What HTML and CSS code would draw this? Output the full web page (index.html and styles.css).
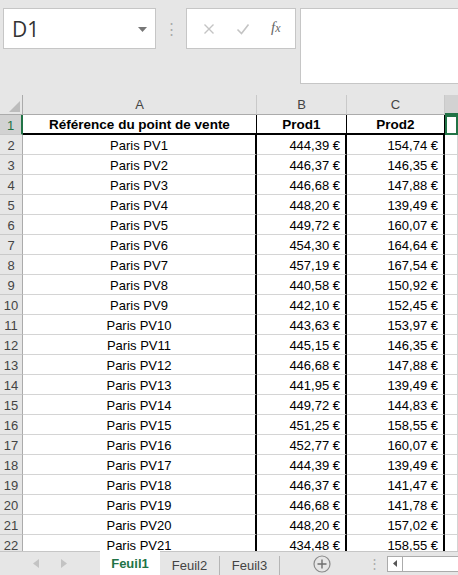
FILE: index.html
```html
<!DOCTYPE html>
<html lang="fr">
<head>
<meta charset="utf-8">
<title>Feuil1</title>
<link rel="stylesheet" href="styles.css">
</head>
<body>
<div class="app">
  <div class="formula-area">
    <div class="namebox">
      <span class="name">D1</span>
      <svg class="dd" width="9" height="5" viewBox="0 0 9 5"><path d="M0 0h9L4.5 5z" fill="#777"/></svg>
    </div>
    <div class="vdots">⋮</div>
    <div class="fbuttons">
      <svg class="ic" width="12" height="12" viewBox="0 0 12 12"><path d="M1.5 1.5l9 9M10.5 1.5l-9 9" stroke="#c4c4c4" stroke-width="1.4"/></svg>
      <svg class="ic" width="14" height="12" viewBox="0 0 14 12"><path d="M1.5 6.5l4 4L12.5 1.5" stroke="#c4c4c4" stroke-width="1.6" fill="none"/></svg>
      <span class="fx">f<span class="fxx">x</span></span>
    </div>
    <div class="finput"></div>
  </div>

  <div class="sheet" id="sheet"></div>

  <div class="tabbar">
    <div class="nav">
      <svg width="6" height="9" viewBox="0 0 6 9"><path d="M6 0v9L0 4.5z" fill="#c3c3c3"/></svg>
      <svg width="6" height="9" viewBox="0 0 6 9"><path d="M0 0v9l6-4.5z" fill="#c3c3c3"/></svg>
    </div>
    <div class="tab active">Feuil1</div>
    <div class="tab">Feuil2</div>
    <div class="tab">Feuil3</div>
    <div class="add">
      <svg width="18" height="18" viewBox="0 0 18 18"><circle cx="9" cy="9" r="8" fill="none" stroke="#8a8a8a" stroke-width="1.2"/><path d="M9 4.5v9M4.5 9h9" stroke="#6e6e6e" stroke-width="1.4"/></svg>
    </div>
    <div class="tdots">⋮</div>
    <div class="hscroll">
      <div class="sbtn"><svg width="4" height="7" viewBox="0 0 4 7"><path d="M4 0v7L0 3.5z" fill="#555"/></svg></div>
      <div class="strack"></div>
    </div>
  </div>
</div>
<script>
const rows = [
 ["Paris PV1","444,39","154,74"],["Paris PV2","446,37","146,35"],["Paris PV3","446,68","147,88"],
 ["Paris PV4","448,20","139,49"],["Paris PV5","449,72","160,07"],["Paris PV6","454,30","164,64"],
 ["Paris PV7","457,19","167,54"],["Paris PV8","440,58","150,92"],["Paris PV9","442,10","152,45"],
 ["Paris PV10","443,63","153,97"],["Paris PV11","445,15","146,35"],["Paris PV12","446,68","147,88"],
 ["Paris PV13","441,95","139,49"],["Paris PV14","449,72","144,83"],["Paris PV15","451,25","158,55"],
 ["Paris PV16","452,77","160,07"],["Paris PV17","444,39","139,49"],["Paris PV18","446,37","141,47"],
 ["Paris PV19","446,68","141,78"],["Paris PV20","448,20","157,02"],["Paris PV21","434,48","158,55"]
];
let h = '<div class="corner"><svg width="11" height="11" viewBox="0 0 11 11"><path d="M11 0v11H0z" fill="#bcbcbc"/></svg></div>'
 + '<div class="ch">A</div><div class="ch">B</div><div class="ch">C</div><div class="ch sel"></div>'
 + '<div class="rh sel">1</div><div class="c h1 center bold">Référence du point de vente</div>'
 + '<div class="c h1 center bold">Prod1</div><div class="c h1 center bold">Prod2</div><div class="c d1"></div>';
rows.forEach((r, i) => {
  h += '<div class="rh">' + (i + 2) + '</div>'
    + '<div class="c ca center">' + r[0] + '</div>'
    + '<div class="c cb num">' + r[1] + ' €</div>'
    + '<div class="c cc num">' + r[2] + ' €</div>'
    + '<div class="c cd"></div>';
});
document.getElementById('sheet').innerHTML = h;
</script>
</body>
</html>
```
FILE: styles.css
```css
* { box-sizing: border-box; }
html, body { margin: 0; padding: 0; }
body { width: 458px; height: 575px; overflow: hidden; background: #e6e6e6;
  font-family: "Liberation Sans", Arial, sans-serif; }
.app { display: flex; flex-direction: column; height: 575px; }

.formula-area { height: 95px; display: flex; align-items: flex-start; padding-top: 8px; flex: none; }
.namebox { margin-left: 3px; width: 153px; height: 41px; background: #fff; border: 1px solid #c6c6c6;
  display: flex; align-items: center; justify-content: space-between; padding: 0 8px 0 8px; }
.name { font-family: "Open Sans", "Liberation Sans", sans-serif; font-size: 21px; color: #333; }
.dd { margin-top: 1px; }
.vdots { width: 30px; text-align: center; color: #aaa; font-size: 15px; line-height: 41px; }
.fbuttons { width: 110px; height: 41px; background: #fff; border: 1px solid #c6c6c6;
  display: flex; align-items: center; justify-content: space-around; padding: 0 4px 0 6px; }
.fx { font-family: "Liberation Serif", serif; font-style: italic; font-size: 15px; color: #666; margin-top: -2px; }
.fxx { font-size: 12px; }
.finput { margin-left: 4px; flex: 1; height: 76px; background: #fff; border: 1px solid #c6c6c6; border-right: none; }

.sheet { flex: none; height: 456px; overflow: hidden; background: #fff; display: grid;
  grid-template-columns: 23px 234px 90px 98px 13px; grid-auto-rows: 20px; font-size: 13px; color: #000; }
.corner { background: #e6e6e6; border-right: 1px solid #ababab; border-bottom: 1px solid #ababab;
  display: flex; align-items: flex-end; justify-content: flex-end; padding: 0 2px 2px 0; }
.ch { background: #e6e6e6; border-right: 1px solid #c9c9c9; border-bottom: 1px solid #ababab;
  text-align: center; line-height: 20px; color: #444; }
.ch.sel { background: #d2d2d2; border-bottom: 2px solid #217346; border-right: none; }
.rh { background: #e6e6e6; border-right: 1px solid #ababab; border-bottom: 1px solid #c9c9c9;
  text-align: center; line-height: 21px; color: #444; }
.rh.sel { background: #d2d2d2; color: #217346; border-right: 2px solid #217346; }
.c { border-right: 1px solid #d4d4d4; border-bottom: 1px solid #d4d4d4; line-height: 21px;
  white-space: nowrap; overflow: hidden; }
.center { text-align: center; }
.bold { font-weight: bold; font-size: 13.5px; }
.num { text-align: right; padding-right: 5px; }
.h1 { border-right: 1px solid #000; border-bottom: 2px solid #000; line-height: 19px; }
.d1 { box-shadow: inset 0 0 0 2px #217346; border: none; }
.ca, .cb, .cc { border-right: 2px solid #000; }

.tabbar { flex: none; height: 24px; display: flex; align-items: stretch; background: #e6e6e6;
  border-top: 1px solid #c6c6c6; color: #444; font-size: 13px; }
.nav { width: 100px; display: flex; align-items: center; justify-content: center; gap: 22px; }
.tab { width: 60px; text-align: center; border-right: 1px solid #b5b5b5; margin-top: 4px; line-height: 19px; }
.tab.active { background: #fff; color: #217346; font-weight: bold; margin-top: -1px; line-height: 25px; border-right: none; }
.add { width: 84px; display: flex; align-items: center; justify-content: center; }
.tdots { width: 20px; text-align: center; color: #aaa; line-height: 23px; }
.hscroll { flex: 1; display: flex; align-items: center; padding-left: 3px; }
.sbtn { width: 16px; height: 16px; background: #fff; border: 1px solid #ababab; display: flex; align-items: center; justify-content: center; }
.strack { flex: 1; height: 16px; background: #fff; border-top: 1px solid #ababab; border-bottom: 1px solid #ababab; }
```
